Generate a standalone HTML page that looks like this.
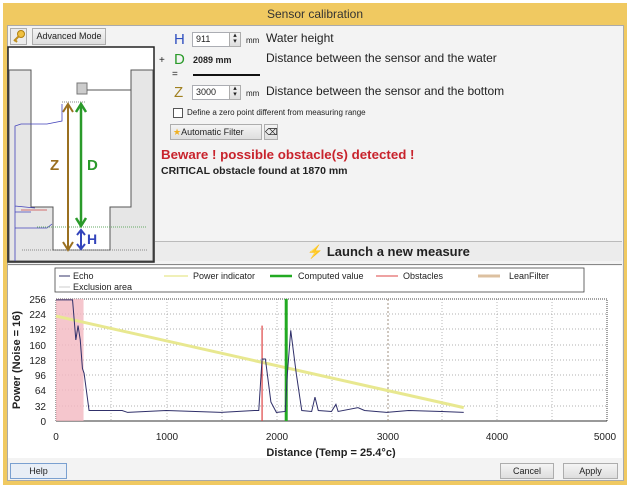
<!DOCTYPE html>
<html><head><meta charset="utf-8"><style>
*{margin:0;padding:0;box-sizing:border-box}
body{width:629px;height:488px;background:#fff;position:relative;overflow:hidden;font-family:"Liberation Sans",sans-serif;color:#222}
.a{position:absolute}
.frame{left:3px;top:3px;width:624px;height:482px;background:#f0c961}
.body{left:7px;top:25px;width:617px;height:456px;background:#f3f3f3;border:1px solid #aaa}
.btn{background:linear-gradient(#f4f4f4,#dedede);border:1px solid #adadad;font-size:9px;text-align:center}
.in{background:#fff;border:1px solid #abadb3;font-size:9px;padding-left:3px;line-height:13px}
.lbl{font-size:12px;color:#222}
</style></head><body>
<div class="a frame"></div>
<div class="a" style="left:3px;top:3px;width:624px;height:22px;text-align:center;font-size:12px;line-height:22px;color:#333">Sensor calibration</div>
<div class="a body"></div>
<div class="a btn" style="left:10px;top:28px;width:17px;height:17px;background:#ececec"><svg width="15" height="15"><circle cx="10" cy="5" r="3.5" fill="#f0c040" stroke="#b08010"/><path d="M8 7 L3 12 M4 11 L6 13" stroke="#c09020" stroke-width="2"/></svg></div>
<div class="a btn" style="left:32px;top:28px;width:74px;height:17px;line-height:15px">Advanced Mode</div>
<svg class="a" style="left:7px;top:46px" width="148" height="217" viewBox="0 0 148 217">
<rect x="1" y="1" width="146" height="215" fill="#fff" stroke="#222" stroke-width="1.5"/>
<path d="M2 24 H24 V161 H46 V204 H103 V161 H124 V24 H146 V215 H2 Z" fill="#e6e6e6" stroke="#555"/>
<rect x="70" y="37" width="10" height="11" fill="#ccc" stroke="#777"/>
<line x1="80" y1="44" x2="124" y2="44" stroke="#555"/>
<line x1="55" y1="56" x2="78" y2="56" stroke="#888" stroke-dasharray="1,1"/>
<path d="M8 215 V80 L14 78 H40 L55 75 V58 M8 160 L28 162 M8 166 H24 M8 172 V182 H40 L45 178" fill="none" stroke="#4444bb" stroke-width="0.8"/>
<path d="M14 164 H40" stroke="#cc4444" stroke-width="0.8"/>
<line x1="30" y1="181" x2="140" y2="181" stroke="#6a6" stroke-dasharray="1,1"/>
<line x1="15" y1="204" x2="140" y2="204" stroke="#888" stroke-dasharray="1,1"/>
<line x1="61" y1="60" x2="61" y2="202" stroke="#9a7020" stroke-width="2"/>
<path d="M56 66 L61 58 L66 66 M56 196 L61 204 L66 196" fill="none" stroke="#9a7020" stroke-width="2"/>
<line x1="74" y1="60" x2="74" y2="178" stroke="#2a9a2a" stroke-width="2.5"/>
<path d="M69 66 L74 58 L79 66 M69 172 L74 180 L79 172" fill="none" stroke="#2a9a2a" stroke-width="2.5"/>
<line x1="74" y1="185" x2="74" y2="202" stroke="#3344bb" stroke-width="2"/>
<path d="M70 189 L74 184 L78 189 M70 198 L74 203 L78 198" fill="none" stroke="#3344bb" stroke-width="2"/>
<text x="43" y="124" font-family="Liberation Sans" font-weight="bold" font-size="15" fill="#9a7020">Z</text>
<text x="80" y="124" font-family="Liberation Sans" font-weight="bold" font-size="15" fill="#2a9a2a">D</text>
<text x="80" y="198" font-family="Liberation Sans" font-weight="bold" font-size="14" fill="#3344bb">H</text>
</svg>
<div class="a" style="left:174px;top:31px;font-size:15px;color:#3050c0">H</div>
<div class="a in" style="left:192px;top:32px;width:38px;height:15px">911</div>
<div class="a btn" style="left:229px;top:32px;width:12px;height:15px;font-size:7px;line-height:6px">▴<br>▾</div>
<div class="a" style="left:246px;top:36px;font-size:8px">mm</div>
<div class="a lbl" style="left:266px;top:31px">Water height</div>
<div class="a" style="left:159px;top:55px;font-size:10px">+</div>
<div class="a" style="left:174px;top:51px;font-size:15px;color:#2a9a2a">D</div>
<div class="a" style="left:193px;top:55px;font-size:9px;font-weight:bold">2089 mm</div>
<div class="a lbl" style="left:266px;top:51px">Distance between the sensor and the water</div>
<div class="a" style="left:172px;top:69px;font-size:10px">=</div>
<div class="a" style="left:193px;top:74px;width:67px;height:2px;background:#111"></div>
<div class="a" style="left:174px;top:84px;font-size:15px;color:#a08020">Z</div>
<div class="a in" style="left:192px;top:85px;width:38px;height:15px">3000</div>
<div class="a btn" style="left:229px;top:85px;width:12px;height:15px;font-size:7px;line-height:6px">▴<br>▾</div>
<div class="a" style="left:246px;top:89px;font-size:8px">mm</div>
<div class="a lbl" style="left:266px;top:84px">Distance between the sensor and the bottom</div>
<div class="a" style="left:173px;top:108px;width:10px;height:10px;border:1px solid #555;background:#fff"></div>
<div class="a" style="left:187px;top:108px;font-size:8px">Define a zero point different from measuring range</div>
<div class="a btn" style="left:170px;top:124px;width:92px;height:16px;line-height:14px;text-align:left;padding-left:2px"><span style="color:#f0b020">★</span>Automatic Filter</div>
<div class="a btn" style="left:264px;top:124px;width:14px;height:16px;font-size:9px;line-height:14px">⌫</div>
<div class="a" style="left:161px;top:147px;font-size:13.3px;font-weight:bold;color:#c8232c">Beware ! possible obstacle(s) detected !</div>
<div class="a" style="left:161px;top:165px;font-size:10.5px;font-weight:bold;color:#222">CRITICAL obstacle found at 1870 mm</div>
<div class="a" style="left:155px;top:241px;width:467px;height:20px;background:#ececec;border-top:1px solid #bbb;text-align:center;font-size:13px;font-weight:bold;line-height:20px"><span style="color:#f0c030">⚡</span> Launch a new measure</div>
<div class="a" style="left:8px;top:264px;width:614px;height:1px;background:#888"></div>
<svg class="a" style="left:8px;top:266px" width="614" height="192" viewBox="8 266 614 192">
<rect x="8" y="266" width="614" height="192" fill="#fff"/>
<rect x="55" y="268" width="529" height="24" fill="#fff" stroke="#444" stroke-width="0.8"/>
<g font-family="Liberation Sans" font-size="9" fill="#222">
<line x1="59" y1="276" x2="70" y2="276" stroke="#33336a"/><text x="73" y="279">Echo</text>
<line x1="59" y1="287" x2="70" y2="287" stroke="#ccc"/><text x="73" y="290">Exclusion area</text>
<line x1="164" y1="276" x2="188" y2="276" stroke="#e0e070"/><text x="193" y="279">Power indicator</text>
<line x1="270" y1="276" x2="292" y2="276" stroke="#2a2" stroke-width="2.5"/><text x="298" y="279">Computed value</text>
<line x1="376" y1="276" x2="398" y2="276" stroke="#d44"/><text x="403" y="279">Obstacles</text>
<line x1="478" y1="276" x2="500" y2="276" stroke="#dcc0a0" stroke-width="3"/><text x="509" y="279">LeanFilter</text>
</g>
<g stroke="#999" stroke-dasharray="1,2" stroke-width="0.7">
<line x1="56" y1="314" x2="607" y2="314"/><line x1="56" y1="329" x2="607" y2="329"/><line x1="56" y1="345" x2="607" y2="345"/><line x1="56" y1="360" x2="607" y2="360"/><line x1="56" y1="375" x2="607" y2="375"/><line x1="56" y1="390" x2="607" y2="390"/><line x1="56" y1="406" x2="607" y2="406"/>
<line x1="111" y1="299" x2="111" y2="421"/><line x1="167" y1="299" x2="167" y2="421"/><line x1="222" y1="299" x2="222" y2="421"/><line x1="277" y1="299" x2="277" y2="421"/><line x1="332" y1="299" x2="332" y2="421"/><line x1="442" y1="299" x2="442" y2="421"/><line x1="497" y1="299" x2="497" y2="421"/><line x1="552" y1="299" x2="552" y2="421"/>
</g>
<rect x="56" y="299" width="551" height="122" fill="none" stroke="#444" stroke-dasharray="1,1"/>
<line x1="56" y1="421" x2="607" y2="421" stroke="#333"/>
<line x1="388" y1="299" x2="388" y2="421" stroke="#a09080" stroke-dasharray="2,2"/>
<g transform="translate(56,421) scale(0.1102,-0.477)">
<rect x="0" y="0" width="250" height="256" fill="#f2b8c0" opacity="0.8"/>
<line x1="0" y1="220" x2="3700" y2="28" stroke="#e8e890" stroke-width="3" vector-effect="non-scaling-stroke"/>
<line x1="1870" y1="0" x2="1870" y2="200" stroke="#d44" stroke-width="1.2" vector-effect="non-scaling-stroke"/>
<line x1="2089" y1="0" x2="2089" y2="256" stroke="#22aa22" stroke-width="3" vector-effect="non-scaling-stroke"/>
<polyline fill="none" stroke="#30306a" stroke-width="1" vector-effect="non-scaling-stroke" points="0,254 150,254 180,170 200,200 220,170 240,110 255,100 300,22 400,22 600,22 650,18 1000,22 1500,18 1800,22 1840,22 1870,130 1900,130 1950,40 2000,18 2080,20 2100,100 2130,190 2180,100 2230,22 2320,20 2350,50 2380,22 2500,20 2540,35 2560,20 2740,28 2800,22 3000,18 3200,22 3500,20 3700,18"/>
</g>
<g font-family="Liberation Sans" font-size="10" fill="#222" text-anchor="end">
<text x="46" y="303">256</text><text x="46" y="318">224</text><text x="46" y="333">192</text><text x="46" y="349">160</text><text x="46" y="364">128</text><text x="46" y="379">96</text><text x="46" y="394">64</text><text x="46" y="410">32</text><text x="46" y="425">0</text>
</g>
<g font-family="Liberation Sans" font-size="10" fill="#222" text-anchor="middle">
<text x="56" y="440">0</text><text x="167" y="440">1000</text><text x="277" y="440">2000</text><text x="388" y="440">3000</text><text x="497" y="440">4000</text><text x="605" y="440">5000</text>
<text x="331" y="456" font-weight="bold" font-size="11">Distance (Temp = 25.4°c)</text>
<text transform="translate(20,360) rotate(-90)" font-weight="bold" font-size="11">Power (Noise = 16)</text>
</g>
</svg>
<div class="a btn" style="left:10px;top:463px;width:57px;height:16px;line-height:14px;background:#e8eef6;border-color:#7aa0d0">Help</div>
<div class="a btn" style="left:500px;top:463px;width:54px;height:16px;line-height:14px">Cancel</div>
<div class="a btn" style="left:563px;top:463px;width:55px;height:16px;line-height:14px">Apply</div>
</body></html>
